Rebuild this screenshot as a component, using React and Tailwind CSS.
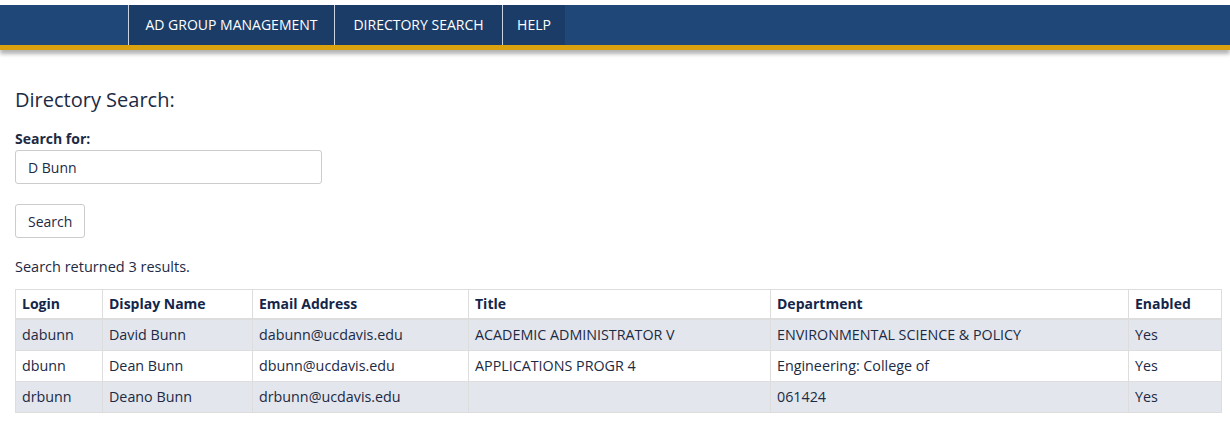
const rows = [
  { login: "dabunn", name: "David Bunn", email: "dabunn@ucdavis.edu", title: "ACADEMIC ADMINISTRATOR V", dept: "ENVIRONMENTAL SCIENCE & POLICY", enabled: "Yes" },
  { login: "dbunn", name: "Dean Bunn", email: "dbunn@ucdavis.edu", title: "APPLICATIONS PROGR 4", dept: "Engineering: College of", enabled: "Yes" },
  { login: "drbunn", name: "Deano Bunn", email: "drbunn@ucdavis.edu", title: "", dept: "061424", enabled: "Yes" },
];

const cols = [
  { key: "login", label: "Login", w: "w-[87px]" },
  { key: "name", label: "Display Name", w: "w-[150px]" },
  { key: "email", label: "Email Address", w: "w-[216px]" },
  { key: "title", label: "Title", w: "w-[302px]" },
  { key: "dept", label: "Department", w: "w-[358px]" },
  { key: "enabled", label: "Enabled", w: "w-[93px]" },
];

const navItems = [
  { label: "AD GROUP MANAGEMENT", w: "w-[206px]" },
  { label: "DIRECTORY SEARCH", w: "w-[168px]" },
  { label: "HELP", w: "w-[63px]" },
];

export default function App() {
  return (
    <div className="min-h-[435px] bg-white text-[#1c2a44] text-[14px]" style={{ fontFamily: '"Open Sans", "Noto Sans", sans-serif' }}>
      {/* Top nav */}
      <div className="pt-[5px]">
        <div className="bg-[#1f4778] border-b-[5px] border-[#dba20f] shadow-[0_4px_4px_rgba(0,0,0,0.3)] flex h-[45px] pl-[128px]">
          {navItems.map((item) => (
            <div
              key={item.label}
              className={`${item.w} flex items-center justify-center pb-[2px] bg-[#1c3c68] text-white text-[14px] border-l border-[#c8d2e0]`}
            >
              {item.label}
            </div>
          ))}
        </div>
      </div>

      <div className="px-[15px]">
        <h2 className="mt-[40px] text-[20px] text-[#1c2a44] leading-none">Directory Search:</h2>

        <div className="mt-[22px]">
          <label className="block font-bold text-[14px] leading-none">Search for:</label>
          <div className="mt-[4px] w-[307px] h-[34px] border border-[#cccccc] rounded-[3px] flex items-center px-[12px] text-[14px]">
            D Bunn
          </div>
        </div>

        <button className="mt-[20px] h-[34px] px-[12px] border border-[#cccccc] rounded-[3px] text-[14px] bg-white">
          Search
        </button>

        <p className="mt-[22px] text-[14.5px] leading-none">Search returned 3 results.</p>

        <table className="mt-[14px] w-[1206px] border-collapse border border-[#dddddd] table-fixed">
          <thead>
            <tr className="h-[30px]">
              {cols.map((c) => (
                <th key={c.key} className={`${c.w} border border-[#dddddd] border-b-2 px-[6px] text-left font-bold text-[14px] text-[#13264a]`}>
                  {c.label}
                </th>
              ))}
            </tr>
          </thead>
          <tbody>
            {rows.map((r, i) => (
              <tr key={r.login} className={`h-[31px] ${i % 2 === 0 ? "bg-[#e3e6ed]" : "bg-white"}`}>
                {cols.map((c) => (
                  <td key={c.key} className="border border-[#dddddd] px-[6px] text-[14.3px]">
                    {r[c.key]}
                  </td>
                ))}
              </tr>
            ))}
          </tbody>
        </table>
      </div>
    </div>
  );
}
